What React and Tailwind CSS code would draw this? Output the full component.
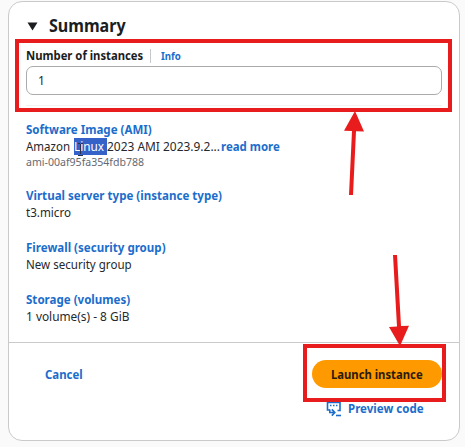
import React from "react";

function Detail({ title, children, className }) {
  return (
    <div className={`whitespace-nowrap text-[12.5px] leading-[17px] text-[#26282c] ${className}`}>
      <div className="font-bold text-[#1c6dcb]"><span className="inline-block origin-left scale-x-[0.924]">{title}</span></div>
      {children}
    </div>
  );
}

function PreviewIcon() {
  return (
    <svg className="h-4 w-4" viewBox="0 0 16 16" fill="none" stroke="#1c6dcb" strokeWidth="1.6">
      <path d="M4 9H1.500V1.500h12.500V9.500H11.500" />
      <path d="M4 4.500h1.500M7 4.500h1.500M10 4.500h1.500" strokeWidth="1.300" />
      <path d="M3.800 8.500v3h4.500M5.800 8.400l3 3.100-3 3.100" />
      <path d="M10 14.500h5" />
    </svg>
  );
}

export default function App() {
  return (
    <div className="relative h-[447px] w-[465px] overflow-hidden bg-[#fafafb] pl-2 pt-px font-['Noto_Sans','Open_Sans',sans-serif]">
      <section className="flex h-[440px] w-[452px] flex-col rounded-[14px] border border-[#c9cacc] bg-white">
        <header className="flex h-[45px] items-center gap-[11px] pl-[18px] pt-[3px] text-[#1b1d21]">
          <svg className="h-[9px] w-[11px]" viewBox="0 0 11 9"><path d="M.5.5h10L5.500 8.500z" fill="currentColor" /></svg>
          <h1 className="text-[17px] font-bold leading-6"><span className="inline-block origin-left scale-x-[0.945]">Summary</span></h1>
        </header>
        <div className="flex h-[18px] items-center whitespace-nowrap pl-[17px]">
          <label className="w-[124px] text-[12px] font-bold text-[#1b1d21]"><span className="inline-block origin-left scale-x-[0.94]">Number of instances</span></label>
          <span className="h-[14px] w-[11px] border-l border-[#c6c9cd]" />
          <a className="text-[11px] font-bold text-[#1c6dcb]"><span className="inline-block origin-left scale-x-[0.88]">Info</span></a>
        </div>
        <div className="ml-[17px] mt-px flex h-[29px] w-[416px] items-center rounded-[7px] border border-[#aaabad] pl-[11px] pt-px text-[12px] text-[#26282c]">1</div>
        <div className="ml-[17px] mt-[10px] h-px w-[416px] bg-[#f2f2f3]" />
        <div className="pl-[17px] pt-[15px]">
          <Detail title="Software Image (AMI)" className="h-[66px]">
            <div className="flex">
              <span className="w-12"><span className="inline-block origin-left scale-x-[0.92]">Amazon</span></span>
              <span className="relative h-[17px] w-[33px] bg-[#3462c8] text-white">
                <span className="inline-block origin-left scale-x-[0.94]">Linux</span>
                <svg className="absolute left-[3px] top-[2px] h-4 w-[7px]" viewBox="0 0 7 16" fill="none" stroke="#293248"><path d="M1 3.500h2M4 3.500h2M3.500 4v10M1 15.500h5" /></svg>
              </span>
              <span className="w-[114px]"><span className="inline-block origin-left scale-x-[0.955]">2023 AMI 2023.9.2...</span></span>
              <a className="font-bold text-[#1c6dcb]"><span className="inline-block origin-left scale-x-[0.915]">read more</span></a>
            </div>
            <div className="text-[11px] leading-[14px] text-[#656a71]"><span className="inline-block origin-left scale-x-[0.96]">ami-00af95fa354fdb788</span></div>
          </Detail>
          <Detail title="Virtual server type (instance type)" className="h-[52px]"><span className="inline-block origin-left scale-x-[0.93]">t3.micro</span></Detail>
          <Detail title="Firewall (security group)" className="h-[52px]"><span className="inline-block origin-left scale-x-[0.925]">New security group</span></Detail>
          <Detail title="Storage (volumes)" className="h-[51px]"><span className="inline-block origin-left scale-x-[0.95]">1 volume(s) - 8 GiB</span></Detail>
        </div>
        <footer className="flex flex-1 justify-between border-t border-[#c9cacc] pl-9 pr-[17px] pt-[17px] text-[12px] font-bold text-[#1c6dcb]">
          <a className="h-7 leading-[30px]"><span className="inline-block origin-left scale-x-[0.95]">Cancel</span></a>
          <div className="flex flex-col">
            <button className="h-7 w-[130px] whitespace-nowrap rounded-full bg-[#ff9900] pt-0.5 text-[#2b1b0b]"><span className="inline-block scale-x-[0.94]">Launch instance</span></button>
            <a className="mt-3 flex h-[18px] items-center gap-[6px] whitespace-nowrap pl-[14px]"><PreviewIcon /><span className="inline-block origin-left scale-x-[0.96]">Preview code</span></a>
          </div>
        </footer>
      </section>
      <div className="absolute left-[15px] top-[39px] h-[73px] w-[437px] border-4 border-[#e81c1c]" />
      <div className="absolute left-[303px] top-[344px] h-[58px] w-[143px] border-4 border-[#e81c1c]" />
      <svg className="absolute left-0 top-0 h-[447px] w-[465px]" viewBox="0 0 465 447" fill="#e81c1c">
        <path d="M355 111L364 131.500l-8-.3L353 195h-4l3-64-8-.3z" />
        <path d="M393 255h4l4 71 8-.3L400 346l-11-19 8-.4z" />
      </svg>
    </div>
  );
}
